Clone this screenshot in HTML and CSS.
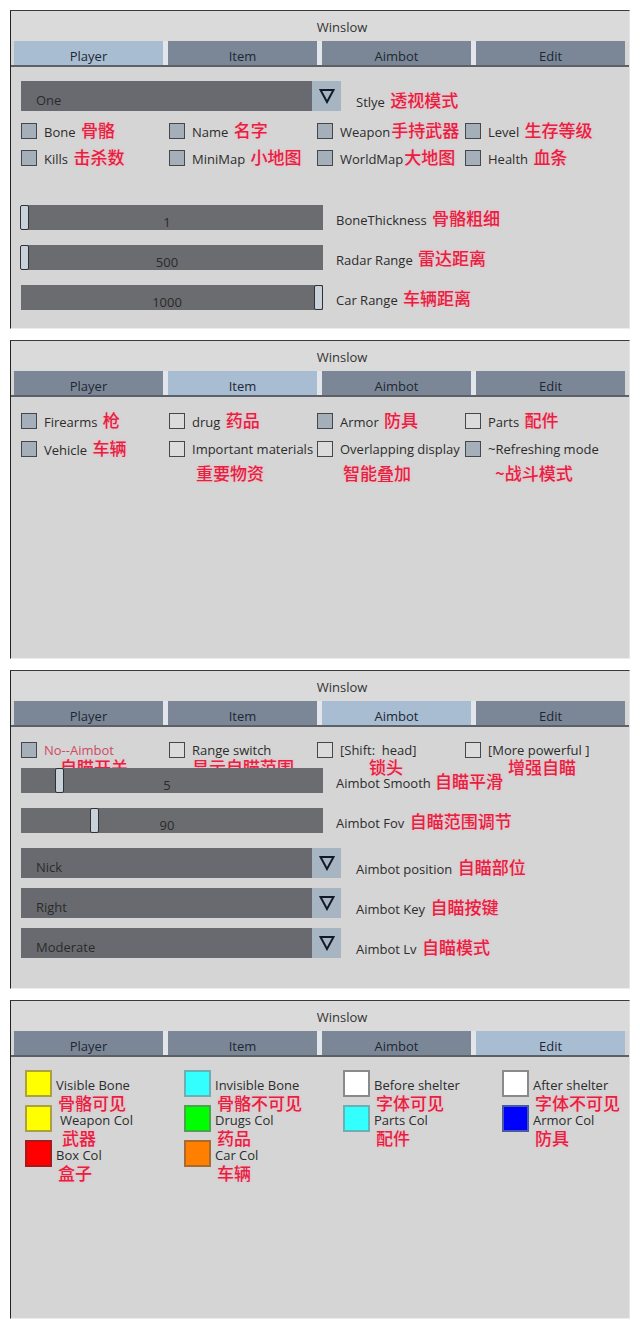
FILE: index.html
```html
<!DOCTYPE html>
<html>
<head>
<meta charset="utf-8">
<link rel="stylesheet" href="styles.css">
</head>
<body>

<!-- Panel 1: Player -->
<div class="panel">
  <div class="title">Winslow</div>
  <div class="tabbar">
    <div class="tabs">
      <div class="tab active">Player</div>
      <div class="tab">Item</div>
      <div class="tab">Aimbot</div>
      <div class="tab">Edit</div>
    </div>
  </div>
  <div class="content">
    <div class="combo-row first">
      <div class="combo">
        <div class="combo-text">One</div>
        <div class="combo-btn"><svg width="16" height="16" viewBox="0 0 16 16"><polygon points="1.5,2 14.5,2 8,14" fill="none" stroke="#121a28" stroke-width="2"/></svg></div>
      </div>
      <div class="combo-label">Stlye <span class="cn">透视模式</span></div>
    </div>
    <div class="checks player">
      <div class="chk"><i class="box on"></i><span class="t">Bone <span class="cn">骨骼</span></span></div>
      <div class="chk"><i class="box on"></i><span class="t">Name <span class="cn">名字</span></span></div>
      <div class="chk"><i class="box on"></i><span class="t">Weapon<span class="cn tight">手持武器</span></span></div>
      <div class="chk"><i class="box on"></i><span class="t">Level <span class="cn">生存等级</span></span></div>
      <div class="chk"><i class="box on"></i><span class="t">Kills <span class="cn">击杀数</span></span></div>
      <div class="chk"><i class="box on"></i><span class="t">MiniMap <span class="cn">小地图</span></span></div>
      <div class="chk"><i class="box on"></i><span class="t">WorldMap<span class="cn tight">大地图</span></span></div>
      <div class="chk"><i class="box on"></i><span class="t">Health <span class="cn">血条</span></span></div>
    </div>
    <div class="sliders player">
      <div class="slider-row">
        <div class="track"><span class="thumb" style="left:-1px"></span>1</div>
        <div class="slider-label">BoneThickness <span class="cn">骨骼粗细</span></div>
      </div>
      <div class="slider-row">
        <div class="track"><span class="thumb" style="left:-1px"></span>500</div>
        <div class="slider-label">Radar Range <span class="cn">雷达距离</span></div>
      </div>
      <div class="slider-row">
        <div class="track"><span class="thumb" style="left:293px"></span>1000</div>
        <div class="slider-label">Car Range <span class="cn">车辆距离</span></div>
      </div>
    </div>
  </div>
</div>

<!-- Panel 2: Item -->
<div class="panel">
  <div class="title">Winslow</div>
  <div class="tabbar">
    <div class="tabs">
      <div class="tab">Player</div>
      <div class="tab active">Item</div>
      <div class="tab">Aimbot</div>
      <div class="tab">Edit</div>
    </div>
  </div>
  <div class="content">
    <div class="checks item">
      <div class="cell"><div class="chk"><i class="box on"></i><span class="t">Firearms <span class="cn">枪</span></span></div></div>
      <div class="cell"><div class="chk"><i class="box"></i><span class="t">drug <span class="cn">药品</span></span></div></div>
      <div class="cell"><div class="chk"><i class="box on"></i><span class="t">Armor <span class="cn">防具</span></span></div></div>
      <div class="cell"><div class="chk"><i class="box"></i><span class="t">Parts <span class="cn">配件</span></span></div></div>
      <div class="cell"><div class="chk"><i class="box on"></i><span class="t">Vehicle <span class="cn">车辆</span></span></div></div>
      <div class="cell"><div class="chk"><i class="box"></i><span class="t">Important materials</span></div><div class="sub cn i2">重要物资</div></div>
      <div class="cell"><div class="chk"><i class="box"></i><span class="t">Overlapping display</span></div><div class="sub cn i3">智能叠加</div></div>
      <div class="cell"><div class="chk"><i class="box on"></i><span class="t">~Refreshing mode</span></div><div class="sub cn i4">~战斗模式</div></div>
    </div>
  </div>
</div>

<!-- Panel 3: Aimbot -->
<div class="panel">
  <div class="title">Winslow</div>
  <div class="tabbar">
    <div class="tabs">
      <div class="tab">Player</div>
      <div class="tab">Item</div>
      <div class="tab active">Aimbot</div>
      <div class="tab">Edit</div>
    </div>
  </div>
  <div class="content">
    <div class="checks aim">
      <div class="cell"><div class="chk"><i class="box on"></i><span class="t warn">No--Aimbot</span></div><div class="sub cn a1">自瞄开关</div></div>
      <div class="cell"><div class="chk"><i class="box"></i><span class="t">Range switch</span></div><div class="sub cn a2">显示自瞄范围</div></div>
      <div class="cell"><div class="chk"><i class="box"></i><span class="t">[Shift:&nbsp;&nbsp;head]</span></div><div class="sub cn a3">锁头</div></div>
      <div class="cell"><div class="chk"><i class="box"></i><span class="t">[More powerful ]</span></div><div class="sub cn a4">增强自瞄</div></div>
    </div>
    <div class="sliders aim">
      <div class="slider-row">
        <div class="track"><span class="thumb" style="left:34px"></span>5</div>
        <div class="slider-label">Aimbot Smooth <span class="cn tight">自瞄平滑</span></div>
      </div>
      <div class="slider-row">
        <div class="track"><span class="thumb" style="left:69px"></span>90</div>
        <div class="slider-label">Aimbot Fov <span class="cn">自瞄范围调节</span></div>
      </div>
    </div>
    <div class="combos aim">
      <div class="combo-row">
        <div class="combo">
          <div class="combo-text">Nick</div>
          <div class="combo-btn"><svg width="16" height="16" viewBox="0 0 16 16"><polygon points="1.5,2 14.5,2 8,14" fill="none" stroke="#121a28" stroke-width="2"/></svg></div>
        </div>
        <div class="combo-label">Aimbot position <span class="cn">自瞄部位</span></div>
      </div>
      <div class="combo-row">
        <div class="combo">
          <div class="combo-text">Right</div>
          <div class="combo-btn"><svg width="16" height="16" viewBox="0 0 16 16"><polygon points="1.5,2 14.5,2 8,14" fill="none" stroke="#121a28" stroke-width="2"/></svg></div>
        </div>
        <div class="combo-label">Aimbot Key <span class="cn">自瞄按键</span></div>
      </div>
      <div class="combo-row">
        <div class="combo">
          <div class="combo-text">Moderate</div>
          <div class="combo-btn"><svg width="16" height="16" viewBox="0 0 16 16"><polygon points="1.5,2 14.5,2 8,14" fill="none" stroke="#121a28" stroke-width="2"/></svg></div>
        </div>
        <div class="combo-label">Aimbot Lv <span class="cn">自瞄模式</span></div>
      </div>
    </div>
  </div>
</div>

<!-- Panel 4: Edit -->
<div class="panel">
  <div class="title">Winslow</div>
  <div class="tabbar">
    <div class="tabs">
      <div class="tab">Player</div>
      <div class="tab">Item</div>
      <div class="tab">Aimbot</div>
      <div class="tab active">Edit</div>
    </div>
  </div>
  <div class="content">
    <div class="swatches">
      <div class="sw-col">
        <div class="sw-item"><i class="sw yellow"></i><div class="sw-text">Visible Bone<span class="cn">骨骼可见</span></div></div>
        <div class="sw-item"><i class="sw yellow"></i><div class="sw-text indent">Weapon Col<span class="cn">武器</span></div></div>
        <div class="sw-item"><i class="sw red"></i><div class="sw-text">Box Col<span class="cn">盒子</span></div></div>
      </div>
      <div class="sw-col">
        <div class="sw-item"><i class="sw cyan"></i><div class="sw-text">Invisible Bone<span class="cn">骨骼不可见</span></div></div>
        <div class="sw-item"><i class="sw green"></i><div class="sw-text">Drugs Col<span class="cn">药品</span></div></div>
        <div class="sw-item"><i class="sw orange"></i><div class="sw-text">Car Col<span class="cn">车辆</span></div></div>
      </div>
      <div class="sw-col">
        <div class="sw-item"><i class="sw white"></i><div class="sw-text">Before shelter<span class="cn">字体可见</span></div></div>
        <div class="sw-item"><i class="sw cyan"></i><div class="sw-text">Parts Col<span class="cn">配件</span></div></div>
      </div>
      <div class="sw-col">
        <div class="sw-item"><i class="sw white"></i><div class="sw-text">After shelter<span class="cn">字体不可见</span></div></div>
        <div class="sw-item"><i class="sw blue"></i><div class="sw-text">Armor Col<span class="cn">防具</span></div></div>
      </div>
    </div>
  </div>
</div>

</body>
</html>
```

FILE: styles.css
```css
* { box-sizing: border-box; }

body {
  margin: 0;
  padding-top: 10px;
  width: 640px;
  background: #ffffff;
  font-family: "Open Sans", "Noto Sans CJK SC", sans-serif;
  font-size: 13px;
  color: #2c2c2c;
}

.panel {
  width: 620px;
  height: 319px;
  margin: 0 0 11px 10px;
  background: #d5d5d5;
  border-top: 1px solid #3a3a3a;
  border-left: 1px solid #222222;
  border-right: 1px solid #e4e4e4;
  border-bottom: 1px solid #ececec;
  overflow: hidden;
}

.title {
  height: 30px;
  padding: 6px 0 0 44px;
  line-height: 20px;
  text-align: center;
  background: #dadada;
  color: #333333;
}

.tabbar {
  padding: 0 2px 0 3px;
  border-bottom: 2px solid #5c6168;
}

.tabs {
  width: 611px;
  display: grid;
  grid-template-columns: repeat(4, 1fr);
  column-gap: 5px;
  background: #e2e6ea;
}

.tab {
  height: 24px;
  padding-top: 7px;
  line-height: 17px;
  text-align: center;
  background: #7b8797;
  color: #1e2733;
}

.tab.active { background: #a9bdd2; }

.content { padding-left: 10px; }

.cn {
  font-family: "Noto Sans CJK SC", sans-serif;
  font-size: 17px;
  font-weight: 500;
  color: #e5213f;
  margin-left: 2px;
  text-shadow: 0 0 3px rgba(255, 170, 190, 0.8);
}
.cn.tight { margin-left: 1px; }

/* combo boxes */
.combo-row {
  display: flex;
  align-items: center;
  height: 30px;
}
.combo-row.first { margin-top: 14px; }

.combo {
  width: 320px;
  height: 30px;
  display: flex;
  flex: none;
}
.combo-text {
  flex: 1;
  background: #696a70;
  padding: 11px 0 0 15px;
  line-height: 16px;
  color: #2a2a2a;
}
.combo-btn {
  width: 29px;
  background: #a7b4c2;
  display: flex;
  align-items: center;
  justify-content: center;
}
.combo-label {
  margin-left: 15px;
  padding-top: 6px;
  white-space: nowrap;
}

.combos.aim {
  margin-top: 15px;
  display: flex;
  flex-direction: column;
  gap: 10px;
}

/* checkboxes */
.checks {
  display: grid;
  grid-template-columns: repeat(4, 148px);
}
.checks.player { margin-top: 6px; grid-auto-rows: 27px; }
.checks.item { margin-top: 10px; grid-auto-rows: 28px; }
.checks.aim { margin-top: 14px; grid-auto-rows: 27px; }

.chk {
  display: flex;
  align-items: center;
  white-space: nowrap;
  height: 100%;
}
.checks.item .chk { height: 28px; }
.checks.aim .chk { height: 17px; }

.t {
  white-space: nowrap;
  line-height: 16px;
}

.box {
  width: 16px;
  height: 16px;
  flex: none;
  margin-right: 7px;
  border: 1px solid #44484d;
  background: #dcdcdc;
}
.box.on { background: #a4afb9; }

.warn { color: #cf4a64; }

.sub {
  display: block;
  white-space: nowrap;
  margin-left: 0;
}
.checks.item .sub { line-height: 20px; }
.checks.aim .sub { line-height: 17px; }

.sub.i2 { padding-left: 27px; }
.sub.i3 { padding-left: 26px; }
.sub.i4 { padding-left: 30px; }
.sub.a1 { padding-left: 39px; }
.sub.a2 { padding-left: 23px; }
.sub.a3 { padding-left: 52px; }
.sub.a4 { padding-left: 43px; }

/* sliders */
.sliders {
  display: flex;
  flex-direction: column;
  gap: 15px;
}
.sliders.player { margin-top: 34px; }

.slider-row {
  display: flex;
  align-items: center;
  height: 25px;
}
.track {
  position: relative;
  width: 302px;
  height: 25px;
  flex: none;
  background: #6b6c70;
  padding: 9px 10px 0 0;
  line-height: 16px;
  text-align: center;
  color: #2a2a2a;
}
.thumb {
  position: absolute;
  top: 0;
  width: 9px;
  height: 25px;
  background: #c9d1d9;
  border: 1.5px solid #2e3136;
  border-radius: 2px;
}
.slider-label {
  margin-left: 13px;
  white-space: nowrap;
}

/* colour swatches */
.swatches {
  margin: 13px 0 0 4px;
  display: grid;
  grid-template-columns: repeat(4, 159px);
}
.sw-item {
  display: flex;
  height: 27px;
  margin-bottom: 8px;
}
.sw {
  width: 27px;
  height: 27px;
  flex: none;
  border: 2px solid #888888;
}
.sw.yellow { background: #ffff00; border-color: #aaa23e; }
.sw.red { background: #ff0000; border-color: #a61a1a; }
.sw.cyan { background: #33ffff; border-color: #6cb0b4; }
.sw.green { background: #00ff00; border-color: #4aa44a; }
.sw.orange { background: #ff8000; border-color: #a86a2e; }
.sw.white { background: #ffffff; border-color: #8a8a8a; }
.sw.blue { background: #0000ff; border-color: #4a5aa0; }

.sw-text {
  margin-left: 4px;
  padding-top: 7px;
  line-height: 16px;
  white-space: nowrap;
}
.sw-text.indent { padding-left: 4px; }
.sw-text .cn {
  display: block;
  line-height: 20px;
  margin-left: 2px;
}
```
